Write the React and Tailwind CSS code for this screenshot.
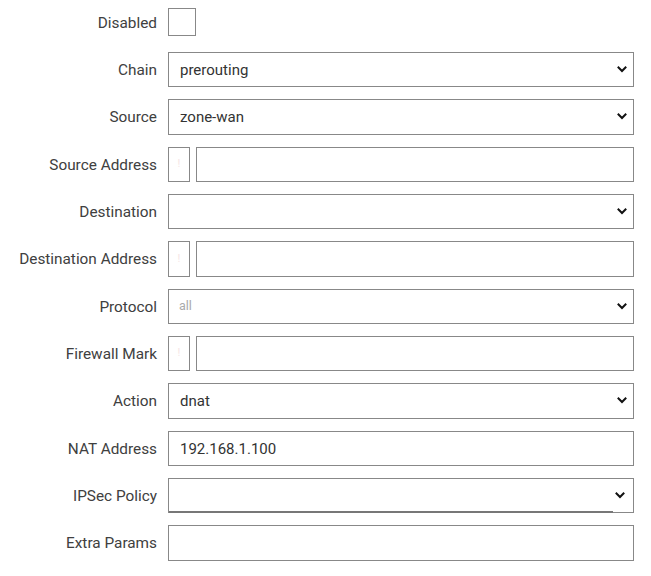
import React from "react";

const Chevron = () => (
  <svg width="10" height="7" viewBox="0 0 10 7" className="shrink-0">
    <path d="M1.5 1.5 L5 5 L8.5 1.5" fill="none" stroke="#111" strokeWidth="2" strokeLinecap="square" />
  </svg>
);

const Label = ({ children }) => (
  <div className="flex items-center justify-end pt-[2px] text-[15.35px] text-[#404040] whitespace-nowrap">{children}</div>
);

const Select = ({ value, placeholder }) => (
  <div className="flex items-center h-full border border-[#888] bg-white pl-[11px] pr-[6px]">
    <span className={placeholder ? "flex-1 text-[12.5px] text-[#aaa] -ml-px" : "flex-1 text-[15px] text-[#333] pt-px"}>
      {value}
    </span>
    <Chevron />
  </div>
);

const Input = ({ value }) => (
  <div className="flex items-center h-full border border-[#888] bg-white pl-[11px] pt-px text-[15px] text-[#333]">
    {value}
  </div>
);

const Dual = () => (
  <div className="flex h-full gap-[6px]">
    <div className="w-[22px] h-full border border-[#888] bg-white flex items-center justify-center text-[11px] text-[#f6e6e6]">!</div>
    <div className="flex-1 h-full border border-[#888] bg-white" />
  </div>
);

export default function App() {
  const rows = [
    ["Disabled", <div className="flex items-center h-full"><div className="w-[28px] h-[28px] border border-[#888] bg-white" /></div>],
    ["Chain", <Select value="prerouting" />],
    ["Source", <Select value="zone-wan" />],
    ["Source Address", <Dual />],
    ["Destination", <Select value="" />],
    ["Destination Address", <Dual />],
    ["Protocol", <Select value="all" placeholder />],
    ["Firewall Mark", <Dual />],
    ["Action", <Select value="dnat" />],
    ["NAT Address", <Input value="192.168.1.100" />],
    [
      "IPSec Policy",
      <div className="flex h-full border border-[#888] bg-white">
        <div className="flex-1 border-b-2 border-[#777] -mb-px" />
        <div className="w-[20px] flex items-center justify-start pl-[2px]">
          <Chevron />
        </div>
      </div>,
    ],
    ["Extra Params", <Input value="" />],
  ];
  return (
    <div className="w-[651px] h-[576px] bg-white pt-[4.67px]" style={{ fontFamily: "Roboto, 'Liberation Sans', sans-serif" }}>
      <div className="grid grid-cols-[157px_466px] gap-x-[11px] gap-y-[12px] auto-rows-[35.33px]">
        {rows.map(([label, ctrl], i) => (
          <React.Fragment key={i}>
            <Label>{label}</Label>
            <div className="h-full">{ctrl}</div>
          </React.Fragment>
        ))}
      </div>
    </div>
  );
}
